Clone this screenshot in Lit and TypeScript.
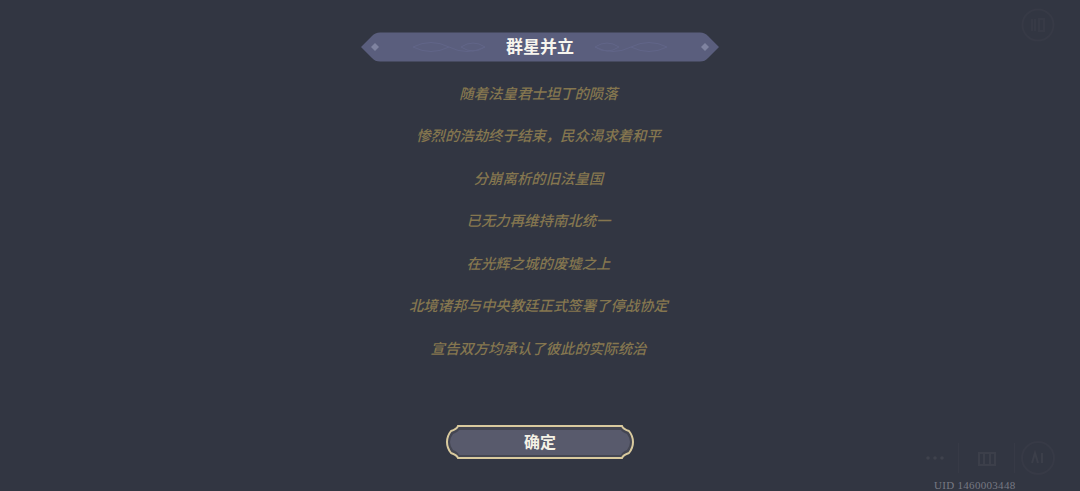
import { LitElement, html, css } from 'lit';
import { customElement } from 'lit/decorators.js';

const LINES = [
  '随着法皇君士坦丁的陨落',
  '惨烈的浩劫终于结束，民众渴求着和平',
  '分崩离析的旧法皇国',
  '已无力再维持南北统一',
  '在光辉之城的废墟之上',
  '北境诸邦与中央教廷正式签署了停战协定',
  '宣告双方均承认了彼此的实际统治',
];

@customElement('app-root')
export class AppRoot extends LitElement {
  static styles = css`
    :host {
      display: block;
      position: relative;
      width: 1080px;
      height: 491px;
      overflow: hidden;
      background: #323642;
      font-family: 'Liberation Serif', 'Noto Sans CJK SC', serif;
    }
    .page {
      display: flex;
      flex-direction: column;
      align-items: center;
      padding-top: 32px;
    }
    .title {
      position: relative;
      display: flex;
      align-items: center;
      justify-content: center;
      width: 358px;
      height: 30px;
      color: #f7f5ee;
      font-size: 17px;
      font-weight: 700;
      line-height: 28px;
    }
    .title svg,
    .confirm svg {
      position: absolute;
      inset: 0;
    }
    .title span,
    .confirm span {
      position: relative;
    }
    .title span {
      top: 1px;
    }
    .confirm span {
      top: -1px;
    }
    .lines {
      display: flex;
      flex-direction: column;
      align-items: center;
      margin-top: 10.5px;
      padding-right: 3px;
    }
    .lines p {
      margin: 0;
      height: 42.5px;
      line-height: 42.5px;
      font-size: 14.4px;
      font-weight: 500;
      font-style: italic;
      color: #85764f;
      white-space: nowrap;
    }
    .confirm {
      position: relative;
      display: flex;
      align-items: center;
      justify-content: center;
      width: 190px;
      height: 36px;
      margin-top: 54px;
      padding: 0;
      border: none;
      background: none;
      color: #f4f1e6;
      font-family: inherit;
      font-size: 16px;
      font-weight: 700;
    }
    .faint {
      position: absolute;
      color: #373a46;
    }
    .top-icon {
      top: 8px;
      right: 25px;
    }
    .dock {
      right: 24px;
      bottom: 14px;
      display: flex;
      align-items: center;
      gap: 4px;
    }
    .dots {
      margin-right: 4px;
    }
    .uid {
      position: absolute;
      left: 934px;
      bottom: -1px;
      font-size: 11px;
      line-height: 13px;
      letter-spacing: 0.3px;
      color: #777982;
    }
  `;

  render() {
    return html`
      <div class="page">
        <div class="title">
          <svg width="358" height="30" viewBox="0 0 358 30">
            <path d="M0 15 L11 4 Q14 0.5 19 0.5 H339 Q344 0.5 347 4 L358 15 L347 26 Q344 29.5 339 29.5 H19 Q14 29.5 11 26 Z" fill="#5a5e7d" />
            <path d="M14 11 L18 15 L14 19 L10 15 Z M344 11 L348 15 L344 19 L340 15 Z" fill="#7f83a0" />
            <g fill="none" stroke="#616588" stroke-width="1">
              <path d="M52 15 Q70 6 88 15 T124 15 Q112 7 100 15 Q112 23 124 15" />
              <path d="M52 15 Q70 24 88 15" />
              <path d="M306 15 Q288 6 270 15 T234 15 Q246 7 258 15 Q246 23 234 15" />
              <path d="M306 15 Q288 24 270 15" />
            </g>
          </svg>
          <span>群星并立</span>
        </div>
        <div class="lines">${LINES.map((l) => html`<p>${l}</p>`)}</div>
        <button class="confirm">
          <svg width="190" height="36" viewBox="0 0 190 36">
            <path d="M13 2 H177 Q178 5 184 7 Q188 12 188 18 Q188 24 184 29 Q178 31 177 34 H13 Q12 31 6 29 Q2 24 2 18 Q2 12 6 7 Q12 5 13 2 Z" fill="#444652" stroke="#d9ca9e" stroke-width="2" />
            <path d="M14 6 H176 Q177 8 182 10 Q185 14 185 18 Q185 22 182 26 Q177 28 176 31 H14 Q13 28 8 26 Q5 22 5 18 Q5 14 8 10 Q13 8 14 6 Z" fill="#585a6c" />
          </svg>
          <span>确定</span>
        </button>
      </div>

      <svg class="faint top-icon" width="34" height="34" viewBox="0 0 34 34" fill="none" stroke="currentColor">
        <circle cx="17" cy="17" r="15.5" stroke-width="2" />
        <path d="M11 11 V23 M14 11 V23 M18 11 H23 V23 H18 Z" stroke-width="2" />
      </svg>

      <div class="faint dock">
        <svg class="dots" width="38" height="38" viewBox="0 0 38 38" fill="#3f424d">
          <circle cx="16" cy="19" r="1.8" /><circle cx="23" cy="19" r="1.8" /><circle cx="30" cy="19" r="1.8" />
        </svg>
        <svg width="2" height="30" viewBox="0 0 2 30"><rect width="1" height="30" fill="currentColor" /></svg>
        <svg width="46" height="38" viewBox="0 0 46 38" fill="none" stroke="#3c3f4a" stroke-width="2">
          <path d="M15 14 H31 V26 H15 Z M20 14 V26 M26 14 V26" />
        </svg>
        <svg width="2" height="30" viewBox="0 0 2 30"><rect width="1" height="30" fill="currentColor" /></svg>
        <svg width="36" height="36" viewBox="0 0 36 36" fill="none" stroke="currentColor" stroke-width="2">
          <circle cx="18" cy="18" r="16" />
          <path d="M12 23 L15 13 L18 23 M22 13 V23" stroke="#3c3f4a" />
        </svg>
      </div>

      <div class="uid">UID 1460003448</div>
    `;
  }
}
